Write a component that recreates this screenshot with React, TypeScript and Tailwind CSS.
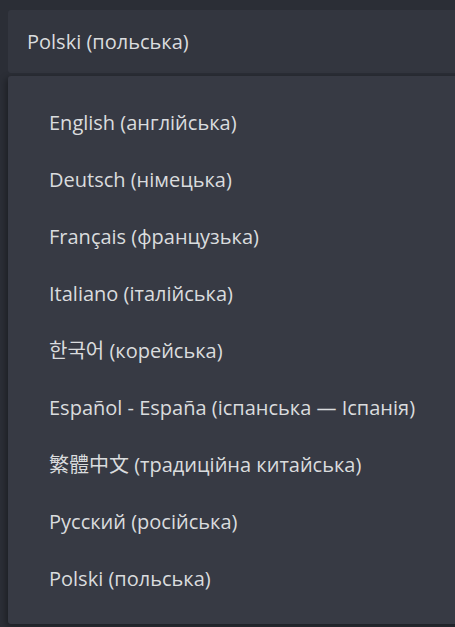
import React from "react";

const items = [
  "English (англійська)",
  "Deutsch (німецька)",
  "Français (французька)",
  "Italiano (італійська)",
  "한국어 (корейська)",
  "Español - España (іспанська — Іспанія)",
  "繁體中文 (традиційна китайська)",
  "Русский (російська)",
  "Polski (польська)",
];

function Label({ text }: { text: string }) {
  const parts = text.split(/([\u0400-\u04FF]+)/);
  return (
    <>
      {parts.map((p, i) =>
        /[\u0400-\u04FF]/.test(p) ? (
          <span key={i} className="font-medium">
            {p}
          </span>
        ) : (
          <span key={i}>{p}</span>
        )
      )}
    </>
  );
}

export default function App() {
  return (
    <div
      className="w-[455px] h-[627px] overflow-hidden bg-[#2b2e36] pl-2 pt-[10px]"
      style={{ fontFamily: '"Open Sans", "Noto Sans CJK KR", "Noto Sans CJK TC", sans-serif' }}
    >
      <div className="h-[63px] w-[460px] rounded-[3px] bg-[#33363f] flex items-center pl-[19px] text-[20px] text-[#dadcde] whitespace-pre">
        <Label text="Polski (польська)" />
      </div>
      <div className="mt-[3px] w-[460px] h-[548px] rounded-[3px] bg-[#373a44] pt-[18px] pb-[17px] shadow-[-2px_2px_6px_rgba(0,0,0,0.35)]">
        {items.map((t) => (
          <div key={t} className="h-[57px] flex items-center pl-[41px] text-[20px] text-[#dadcde] whitespace-pre">
            <Label text={t} />
          </div>
        ))}
      </div>
    </div>
  );
}
